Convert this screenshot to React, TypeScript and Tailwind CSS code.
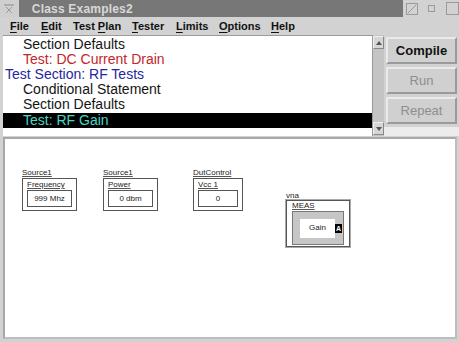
import React from "react";

// Menu entries: label split around the underlined mnemonic, w = slot width
const menus: { pre: string; key: string; post: string; w: number }[] = [
  { pre: "", key: "F", post: "ile", w: 31 },
  { pre: "", key: "E", post: "dit", w: 32 },
  { pre: "Test ", key: "P", post: "lan", w: 59 },
  { pre: "", key: "T", post: "ester", w: 44 },
  { pre: "", key: "L", post: "imits", w: 43 },
  { pre: "", key: "O", post: "ptions", w: 52 },
  { pre: "", key: "H", post: "elp", w: 30 },
];

const rows = [
  { text: "Section Defaults", indent: true, color: "text-[#151515]" },
  { text: "Test: DC Current Drain", indent: true, color: "text-[#c3262c]" },
  { text: "Test Section: RF Tests", indent: false, color: "text-[#2626a0]" },
  { text: "Conditional Statement", indent: true, color: "text-[#151515]" },
  { text: "Section Defaults", indent: true, color: "text-[#151515]" },
  { text: "Test: RF Gain", indent: true, color: "text-[#48d6c4]", selected: true },
];

// Small block on the test canvas
const Block = ({
  x,
  y,
  title,
  name,
  value,
  w,
}: {
  x: number;
  y: number;
  title: string;
  name: string;
  value: string;
  w: number;
}) => (
  <div className="absolute flex flex-col" style={{ left: x, top: y, width: w }}>
    <span className="text-[8px] leading-[8px] text-[#222] underline decoration-[#555]">{title}</span>
    <div className="mt-[1px] h-[33px] border border-[#555] px-[4px] pt-[2px] flex flex-col">
      <span className="text-[8px] leading-[8px] text-[#222] underline decoration-[#555]">{name}</span>
      <div className="mt-[1px] h-[17px] border border-[#555] flex items-center justify-center text-[8px] text-[#222]">
        {value}
      </div>
    </div>
  </div>
);

export default function App() {
  return (
    <div
      className="w-[459px] h-[342px] bg-[#d2d2d2] flex flex-col overflow-hidden select-none"
      style={{ fontFamily: '"Liberation Sans", Arial, sans-serif' }}
    >
      {/* Title bar */}
      <div className="h-[17px] flex items-stretch bg-[#d2d2d2]">
        <div className="w-[18px] flex items-center justify-center bg-[#cfcfcf]">
          <svg width="12" height="10" viewBox="0 0 12 10">
            <path d="M1 1h10" stroke="#8a8a8a" strokeWidth="1" />
            <path d="M3 3l6 6M9 3l-6 6" stroke="#9a9a9a" strokeWidth="1" />
          </svg>
        </div>
        <div className="ml-[1px] w-[389px] bg-[#777777] flex items-center pl-[13px] text-[12px] font-bold text-[#d8d8d8] tracking-[0.2px]">
          Class Examples2
        </div>
        <div className="flex-1 flex items-center gap-[9px] pl-[3px]">
          <svg width="12" height="12" viewBox="0 0 12 12">
            <rect x="0.5" y="0.5" width="11" height="11" fill="none" stroke="#9a9a9a" />
            <path d="M2 10L10 2" stroke="#9a9a9a" />
          </svg>
          <svg width="7" height="7" viewBox="0 0 7 7" className="ml-[1px]">
            <rect x="0.5" y="0.5" width="6" height="6" fill="none" stroke="#9a9a9a" />
          </svg>
          <svg width="13" height="13" viewBox="0 0 13 13" className="ml-[2px]">
            <rect x="0.5" y="0.5" width="12" height="12" fill="none" stroke="#9a9a9a" />
          </svg>
        </div>
      </div>

      {/* Menu bar */}
      <div className="h-[18px] flex items-center pl-[10px] text-[11px] font-bold text-[#111]">
        {menus.map((m, i) => (
          <span key={i} className="shrink-0 whitespace-nowrap" style={{ width: m.w }}>
            {m.pre}
            <span className="underline underline-offset-[2px]">{m.key}</span>
            {m.post}
          </span>
        ))}
      </div>

      {/* Test plan list, scrollbar and action buttons */}
      <div className="h-[101px] flex pl-[3px]">
        <div className="w-[369px] bg-white border-t border-[#9a9a9a] pt-[1px] flex flex-col">
          {rows.map((r, i) => (
            <div
              key={i}
              className={`h-[15px] flex items-center text-[14px] whitespace-nowrap ${r.color} ${
                r.indent ? "pl-[20px]" : "pl-[2px]"
              } ${r.selected ? "bg-black mt-[1px]" : ""}`}
            >
              {r.text}
            </div>
          ))}
        </div>
        <div className="w-[12px] bg-[#c4c4c4] border-l border-[#9a9a9a] flex flex-col justify-between py-[1px]">
          <div className="h-[13px] bg-[#d6d6d6] border border-[#eeeeee] border-r-[#888] border-b-[#888] flex items-center justify-center">
            <svg width="6" height="4" viewBox="0 0 6 4">
              <path d="M3 0L6 4H0z" fill="#555" />
            </svg>
          </div>
          <div className="h-[13px] bg-[#d6d6d6] border border-[#eeeeee] border-r-[#888] border-b-[#888] flex items-center justify-center">
            <svg width="6" height="4" viewBox="0 0 6 4">
              <path d="M0 0H6L3 4z" fill="#555" />
            </svg>
          </div>
        </div>
        <div className="flex-1 flex flex-col pl-[2px] pr-[2px] pt-[2px] gap-[3px] bg-[#d2d2d2]">
          {[
            { t: "Compile", on: true },
            { t: "Run", on: false },
            { t: "Repeat", on: false },
          ].map((b) => (
            <div
              key={b.t}
              className={`h-[27px] bg-[#d0d0d0] border-2 border-[#eaeaea] border-r-[#9a9a9a] border-b-[#9a9a9a] flex items-center justify-center text-[13px] ${
                b.on ? "font-bold text-[#111]" : "text-[#8e8e8e]"
              }`}
            >
              {b.t}
            </div>
          ))}
          <div className="flex-1 bg-[#ececec] -mx-[2px]" />
        </div>
      </div>

      {/* Canvas */}
      <div className="mt-[1px] ml-[3px] mr-[2px] h-[202px] relative bg-white border-2 border-[#a8a8a8] border-b-[#bdbdbd] border-r-[#bdbdbd]">
        <Block x={17} y={30} w={55} title="Source1" name="Frequency" value="999 Mhz" />
        <Block x={98} y={30} w={55} title="Source1" name="Power" value="0 dbm" />
        <Block x={188} y={30} w={50} title="DutControl" name="Vcc 1" value="0" />

        {/* vna measurement block */}
        <div className="absolute flex flex-col" style={{ left: 281, top: 53, width: 64 }}>
          <span className="text-[8px] leading-[8px] text-[#222] underline decoration-[#555]">vna</span>
          <div className="h-[47px] border border-[#555] outline outline-1 outline-[#aaa] px-[5px] pt-[1px] flex flex-col">
            <span className="text-[8px] leading-[8px] text-[#222] underline decoration-[#555]">MEAS</span>
            <div className="mt-[1px] h-[34px] bg-[#c6c6c6] border border-[#777] flex items-center pl-[7px]">
              <div className="w-[35px] h-[19px] bg-white flex items-center justify-center text-[8px] text-[#222]">
                Gain
              </div>
              <div className="w-[7px] h-[9px] bg-black text-white text-[7px] leading-[9px] text-center font-bold">
                A
              </div>
            </div>
          </div>
        </div>
      </div>
    </div>
  );
}
